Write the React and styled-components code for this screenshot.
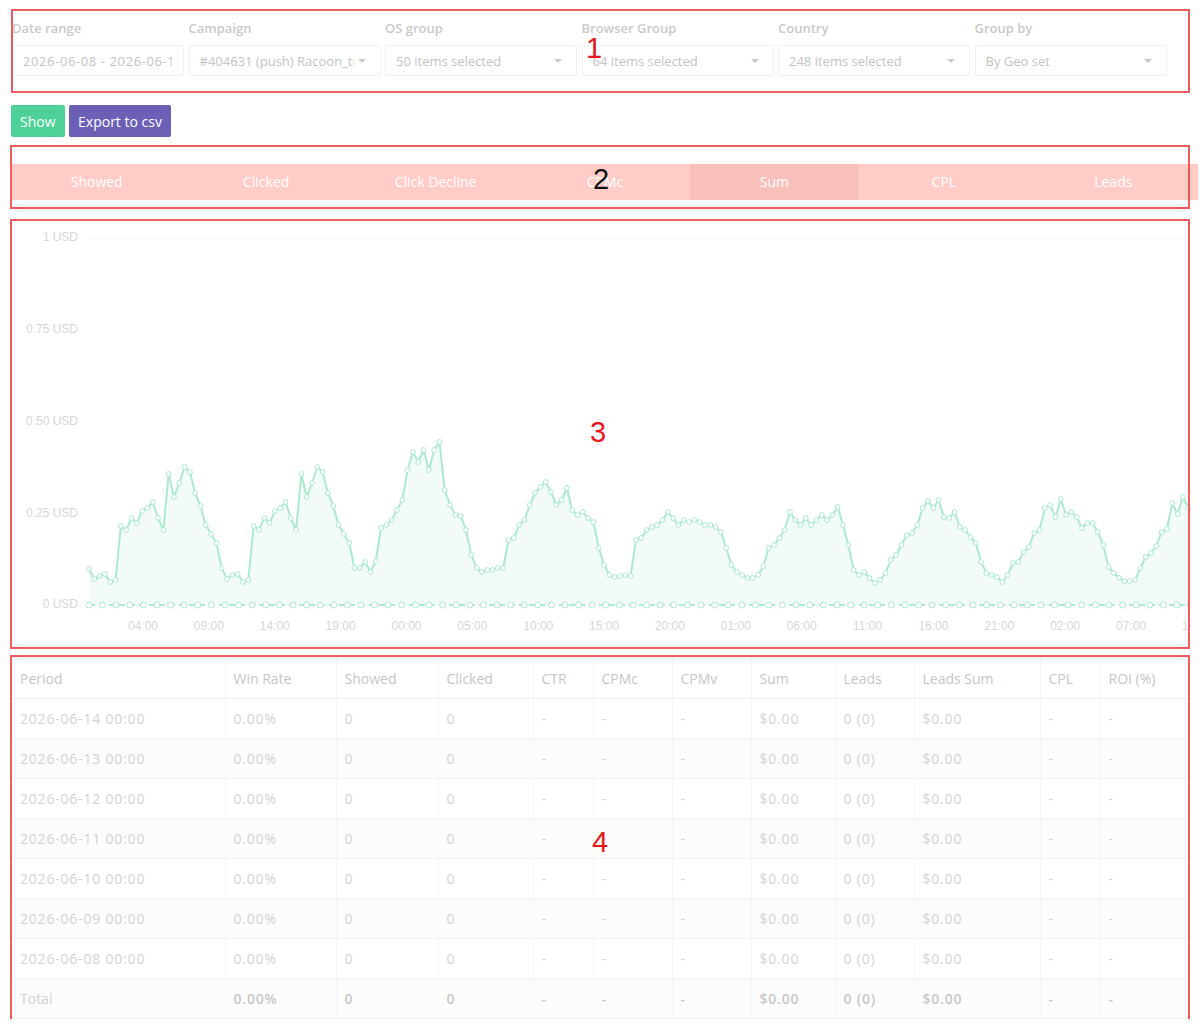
import React from "react";
import styled, { createGlobalStyle } from "styled-components";

const GlobalStyle = createGlobalStyle`
  body {
    margin: 0;
    background: #fff;
    font-family: "Open Sans", "Noto Sans", sans-serif;
    overflow: hidden;
  }
`;

const Page = styled.div`
  position: relative;
  width: 1200px;
  box-sizing: border-box;
  padding: 19px 12px 0 12px;
`;

const Filters = styled.div`
  display: grid;
  grid-template-columns: 172px repeat(5, 192px);
  column-gap: 4.5px;
`;

const Field = styled.div`
  display: flex;
  flex-direction: column;
`;

const FieldLabel = styled.div`
  font-size: 13px;
  font-weight: 600;
  line-height: 18px;
  color: #c9c9c9;
  margin-bottom: 8px;
  white-space: nowrap;
`;

const SelectBox = styled.div`
  height: 31px;
  box-sizing: border-box;
  border: 1px solid #f1f1f1;
  border-radius: 2px;
  padding: 0 ${(p) => (p.$plain ? "11px" : "14px")} 0 10px;
  display: flex;
  align-items: center;
  font-size: 13px;
  color: #c3c3c3;
`;

const Value = styled.span`
  flex: 1;
  overflow: hidden;
  white-space: nowrap;
  letter-spacing: ${(p) => (p.$plain ? "0.6px" : "0")};
`;

const Caret = styled.span`
  width: 0;
  height: 0;
  margin-left: 4px;
  border-left: 4px solid transparent;
  border-right: 4px solid transparent;
  border-top: 4px solid #c9c9c9;
`;

const Actions = styled.div`
  display: flex;
  gap: 4px;
  margin: 29px 0 0 -1px;
`;

const Button = styled.button`
  height: 32px;
  padding: 0 ${(p) => p.$pad}px;
  border: none;
  border-radius: 2px;
  background: ${(p) => p.$bg};
  color: #fff;
  font-family: inherit;
  font-size: 14px;
  cursor: pointer;
`;

const TabBar = styled.div`
  display: grid;
  grid-template-columns: repeat(7, 1fr);
  width: 1186px;
  margin-top: 27px;
  background: #ffccc7;
`;

const Tab = styled.div`
  height: 36px;
  line-height: 36px;
  text-align: center;
  font-size: 14px;
  color: #fff;
  background: ${(p) => (p.$active ? "#f8c0ba" : "transparent")};
`;

const ChartBox = styled.div`
  margin-top: 21px;
  height: 424px;
  overflow: hidden;
`;

const Table = styled.table`
  width: 1176px;
  margin-top: 14px;
  border-collapse: collapse;
  table-layout: fixed;
  font-size: 14px;
`;

const Th = styled.th`
  height: 39px;
  padding: 0 8px;
  text-align: left;
  font-weight: 400;
  color: #c6c6c6;
  border-bottom: 1px solid #f1f1f1;
  border-right: 1px solid #f6f6f6;
  white-space: nowrap;
`;

const Td = styled.td`
  height: 39px;
  padding: 0 8px;
  color: ${(p) => (p.$total ? "#c8c8c8" : "#d3d3d3")};
  font-weight: ${(p) => (p.$total ? 600 : 400)};
  letter-spacing: ${(p) => (p.$num ? "0.8px" : "0")};
  border-bottom: 1px solid #f3f3f3;
  border-right: 1px solid #f6f6f6;
  white-space: nowrap;
`;

const Row = styled.tr`
  background: ${(p) => (p.$odd ? "#fcfcfc" : "#fff")};
`;

const Annotation = styled.div`
  position: absolute;
  left: ${(p) => p.$x}px;
  top: ${(p) => p.$y}px;
  width: ${(p) => p.$w}px;
  height: ${(p) => p.$h}px;
  box-sizing: border-box;
  border: 2.5px solid rgba(236, 64, 68, 0.85);
  pointer-events: none;
`;

const Marker = styled.div`
  position: absolute;
  left: ${(p) => p.$x}px;
  top: ${(p) => p.$y}px;
  font-family: "Liberation Sans", Arial, sans-serif;
  font-size: 29px;
  line-height: 29px;
  color: ${(p) => p.$color};
`;

const filters = [
  { label: "Date range", value: "2026-06-08 - 2026-06-14", plain: true },
  { label: "Campaign", value: "#404631 (push) Racoon_traffic_main" },
  { label: "OS group", value: "50 items selected" },
  { label: "Browser Group", value: "64 items selected" },
  { label: "Country", value: "248 items selected" },
  { label: "Group by", value: "By Geo set" },
];

const tabs = ["Showed", "Clicked", "Click Decline", "CPMc", "Sum", "CPL", "Leads"];

// y pixel of each hourly point in the reference (0 USD at 605, 0.25 USD = 92px)
const series = [
  569, 579, 576, 574, 582, 580, 526, 530, 518, 523, 511, 508, 502, 518, 530, 474, 497, 483, 467, 472,
  493, 506, 525, 534, 543, 568, 579, 575, 574, 582, 580, 526, 530, 518, 523, 511, 508, 502, 518, 530,
  474, 497, 483, 467, 472, 493, 506, 525, 534, 543, 568, 568, 562, 572, 561, 528, 525, 520, 510, 500,
  470, 452, 462, 450, 470, 450, 442, 490, 505, 515, 516, 530, 555, 568, 572, 570, 570, 568, 568, 540,
  538, 525, 520, 505, 493, 487, 482, 492, 505, 500, 488, 510, 515, 512, 518, 522, 548, 565, 575, 577,
  576, 575, 576, 540, 538, 530, 527, 525, 520, 512, 518, 525, 520, 522, 520, 522, 525, 525, 527, 532,
  548, 565, 572, 575, 578, 578, 575, 566, 548, 545, 538, 530, 512, 520, 525, 518, 525, 520, 515, 520,
  515, 507, 525, 545, 570, 575, 572, 578, 583, 580, 573, 560, 555, 545, 535, 533, 525, 508, 501, 508,
  500, 517, 518, 512, 527, 530, 537, 543, 562, 573, 575, 577, 582, 575, 563, 562, 552, 547, 533, 530,
  508, 505, 517, 499, 515, 512, 517, 528, 523, 523, 532, 545, 567, 573, 578, 581, 581, 580, 568, 557,
  553, 546, 532, 529, 503, 514, 497, 508, 500,
];

const X0 = 89 - 12;
const STEP = 5.31;
const TOP = 221;
const ZERO = 605 - TOP;

const Chart = () => {
  const pts = series.map((y, i) => [X0 + i * STEP, y - TOP]);
  const line = pts.map((p) => p.join(",")).join(" ");
  const last = pts[pts.length - 1];
  const area = `${X0},${ZERO} ${line} ${last[0]},${ZERO}`;
  const zeros = [];
  for (let x = X0; x < 1180; x += 13.6) zeros.push(x);
  const yTicks = [
    ["1 USD", 238],
    ["0.75 USD", 330],
    ["0.50 USD", 422],
    ["0.25 USD", 514],
    ["0 USD", 605],
  ];
  const xTicks = ["04:00", "09:00", "14:00", "19:00", "00:00", "05:00", "10:00", "15:00", "20:00",
    "01:00", "06:00", "11:00", "16:00", "21:00", "02:00", "07:00", "12:00"];
  return (
    <svg width="1176" height="424" style={{ display: "block" }}>
      <line x1={X0} x2={1176} y1={238 - TOP} y2={238 - TOP} stroke="#f6f6f6" />
      {yTicks.map(([t, y]) => (
        <text key={t} x="66" y={y - TOP} textAnchor="end" dominantBaseline="middle"
          fontFamily="Liberation Sans, Arial, sans-serif" fontSize="12" fill="#d6d6d6">{t}</text>
      ))}
      {xTicks.map((t, i) => (
        <text key={t + i} x={131 + i * 65.87} y={627 - TOP} textAnchor="middle" dominantBaseline="middle"
          fontFamily="Liberation Sans, Arial, sans-serif" fontSize="12" fill="#d6d6d6">{t}</text>
      ))}
      <polygon points={area} fill="#f2fbf7" />
      <polyline points={line} fill="none" stroke="#ace9d0" strokeWidth="2" />
      {pts.map(([x, y], i) => (
        <circle key={i} cx={x} cy={y} r="2.4" fill="#fff" stroke="#ace9d0" strokeWidth="1" />
      ))}
      <line x1={X0} x2={1176} y1={ZERO} y2={ZERO} stroke="#ace9d0" strokeWidth="2" strokeDasharray="6 4" />
      {zeros.map((x, i) => (
        <circle key={i} cx={x} cy={ZERO} r="3" fill="#fff" stroke="#ace9d0" strokeWidth="1" />
      ))}
    </svg>
  );
};

const columns = [
  ["Period", 213], ["Win Rate", 111], ["Showed", 102], ["Clicked", 95], ["CTR", 60], ["CPMc", 79],
  ["CPMv", 79], ["Sum", 84], ["Leads", 79], ["Leads Sum", 126], ["CPL", 60], ["ROI (%)", 88],
];

const days = ["14", "13", "12", "11", "10", "09", "08"];
const rowValues = (period) => [period, "0.00%", "0", "0", "-", "-", "-", "$0.00", "0 (0)", "$0.00", "-", "-"];

export default function App() {
  return (
    <Page>
      <GlobalStyle />
      <Filters>
        {filters.map((f) => (
          <Field key={f.label}>
            <FieldLabel>{f.label}</FieldLabel>
            <SelectBox $plain={f.plain}>
              <Value $plain={f.plain}>{f.value}</Value>
              {!f.plain && <Caret />}
            </SelectBox>
          </Field>
        ))}
      </Filters>

      <Actions>
        <Button $bg="#4dd198" $pad={9}>Show</Button>
        <Button $bg="#6b5fb6" $pad={9.5}>Export to csv</Button>
      </Actions>

      <TabBar>
        {tabs.map((t) => (
          <Tab key={t} $active={t === "Sum"}>{t}</Tab>
        ))}
      </TabBar>

      <ChartBox>
        <Chart />
      </ChartBox>

      <Table>
        <colgroup>
          {columns.map(([name, w]) => (
            <col key={name} style={{ width: w }} />
          ))}
        </colgroup>
        <thead>
          <tr>
            {columns.map(([name]) => (
              <Th key={name}>{name}</Th>
            ))}
          </tr>
        </thead>
        <tbody>
          {days.map((d, i) => (
            <Row key={d} $odd={i % 2 === 1}>
              {rowValues(`2026-06-${d} 00:00`).map((v, j) => (
                <Td key={j} $num>{v}</Td>
              ))}
            </Row>
          ))}
          <Row $odd>
            {rowValues("Total").map((v, j) => (
              <Td key={j} $total={j > 0} $num={j > 0}>{v}</Td>
            ))}
          </Row>
        </tbody>
      </Table>

      <Annotation $x={11} $y={9} $w={1179} $h={84} />
      <Marker $x={586} $y={34} $color="#e8141c">1</Marker>
      <Annotation $x={10} $y={145} $w={1180} $h={64} />
      <Marker $x={593} $y={165} $color="#111">2</Marker>
      <Annotation $x={10} $y={219} $w={1180} $h={430} />
      <Marker $x={590} $y={418} $color="#e8141c">3</Marker>
      <Annotation $x={10} $y={655} $w={1180} $h={370} />
      <Marker $x={592} $y={828} $color="#e8141c">4</Marker>
    </Page>
  );
}
